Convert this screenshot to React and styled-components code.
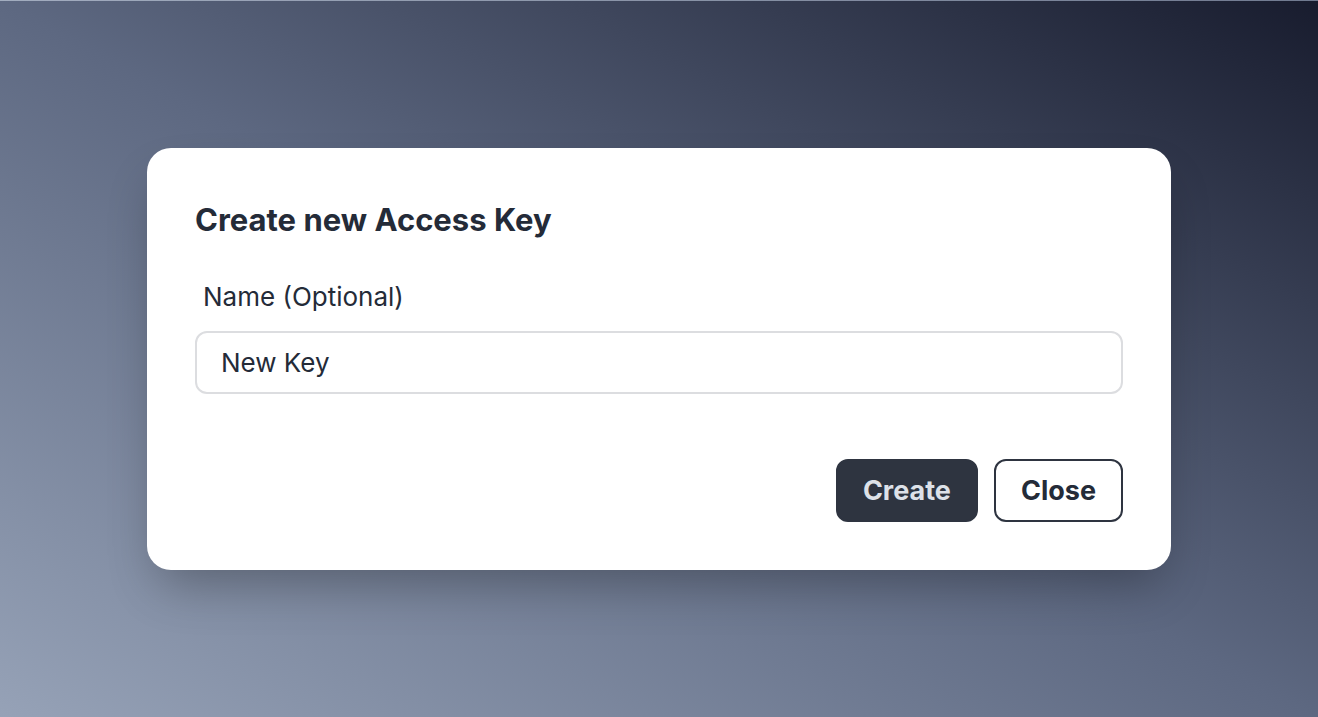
import styled, { createGlobalStyle } from 'styled-components';

const GlobalStyle = createGlobalStyle`
  html, body {
    margin: 0;
    padding: 0;
  }
  body {
    font-family: Inter, 'Noto Sans', 'Liberation Sans', sans-serif;
  }
`;

const Backdrop = styled.div`
  box-sizing: border-box;
  width: 100vw;
  height: 100vh;
  display: flex;
  align-items: center;
  justify-content: center;
  border-top: 1px solid rgba(255, 255, 255, 0.12);
  background: linear-gradient(to top right, #96a2b7 0%, #5d6881 50%, #181c2e 100%);
`;

const Modal = styled.div`
  box-sizing: border-box;
  width: 1024px;
  padding: 48px;
  background-color: #fff;
  border-radius: 24px;
  box-shadow: 0 25px 50px -12px rgba(0, 0, 0, 0.3);
  display: flex;
  flex-direction: column;
`;

const Title = styled.h2`
  margin: 0;
  font-size: 31px;
  line-height: 48px;
  font-weight: 700;
  color: #242b38;
`;

const Label = styled.label`
  margin-top: 34px;
  padding-left: 8px;
  font-size: 26px;
  line-height: 38px;
  color: #242b38;
`;

const TextInput = styled.input`
  box-sizing: border-box;
  margin-top: 15px;
  width: 100%;
  height: 63px;
  padding: 0 24px;
  border: 2px solid #dcdde0;
  border-radius: 12px;
  font-family: inherit;
  font-size: 26px;
  color: #242b38;
  outline: none;
`;

const Actions = styled.div`
  display: flex;
  justify-content: flex-end;
  gap: 16px;
  margin-top: 65px;
`;

const Button = styled.button`
  box-sizing: border-box;
  height: 63px;
  padding: 0 25px;
  border: 2px solid #2e3440;
  border-radius: 12px;
  font-family: inherit;
  font-size: 27px;
  font-weight: 700;
  cursor: pointer;
  background-color: ${(p) => (p.$primary ? '#2e3440' : '#fff')};
  color: ${(p) => (p.$primary ? '#dde1e8' : '#242b38')};
`;

export default function App() {
  return (
    <>
      <GlobalStyle />
      <Backdrop>
        <Modal>
          <Title>Create new Access Key</Title>
          <Label htmlFor='key-name'>Name (Optional)</Label>
          <TextInput id='key-name' type='text' defaultValue='New Key' />
          <Actions>
            <Button $primary>Create</Button>
            <Button>Close</Button>
          </Actions>
        </Modal>
      </Backdrop>
    </>
  );
}
